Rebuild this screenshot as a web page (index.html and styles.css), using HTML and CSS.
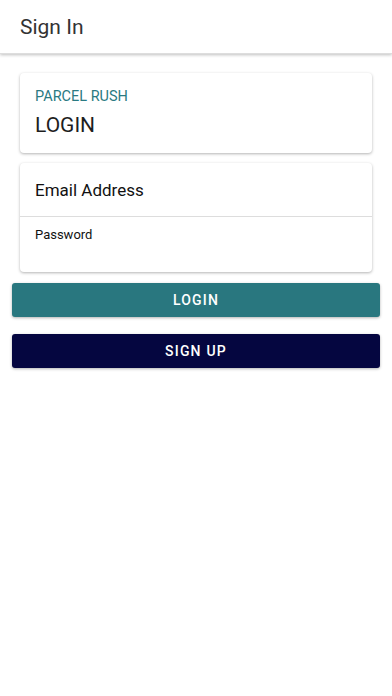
FILE: index.html
```html
<!DOCTYPE html>
<html>
<head>
<meta charset="utf-8">
<link rel="stylesheet" href="styles.css">
</head>
<body>
<header class="topbar"><h1 class="title">Sign In</h1></header>
<main class="content">
  <section class="card head-card">
    <div class="brand">PARCEL RUSH</div>
    <div class="heading">LOGIN</div>
  </section>
  <section class="card form-card">
    <div class="field email">Email Address</div>
    <div class="field password">Password</div>
  </section>
  <div class="buttons">
    <button class="btn btn-login">LOGIN</button>
    <button class="btn btn-signup">SIGN UP</button>
  </div>
</main>
</body>
</html>
```
FILE: styles.css
```css
* { box-sizing: border-box; }
html, body { margin: 0; padding: 0; background: #fff; }
body { font-family: Roboto, "Noto Sans", sans-serif; width: 392px; height: 696px; overflow: hidden; }
.topbar {
  height: 54px;
  display: flex;
  align-items: center;
  padding: 0 20px;
  background: #fff;
  box-shadow: 0 1px 3px rgba(0,0,0,0.25);
  border-bottom: 1px solid #ddd;
}
.title { margin: 0; font-size: 21px; font-weight: 400; color: #333; padding-top: 1px; }
.content { padding: 19px 12px 0; display: flex; flex-direction: column; }
.card {
  margin: 0 8px;
  background: #fff;
  border-radius: 4px;
  box-shadow: 0 1px 3px rgba(0,0,0,0.3);
}
.head-card { height: 80px; padding: 15px 15px 0; }
.brand { color: #2a7a82; font-size: 14.5px; line-height: 18px; }
.heading { color: #1e1e1e; font-size: 21px; line-height: 24px; margin-top: 7px; font-weight: 400; }
.form-card { margin-top: 10px; height: 109px; display: flex; flex-direction: column; }
.field { padding: 0 15px; color: #111; }
.email { height: 54px; font-size: 17px; display: flex; align-items: center; border-bottom: 1px solid #ddd; padding-top: 1px; }
.password { font-size: 13px; padding-top: 10px; }
.buttons { margin-top: 11px; display: flex; flex-direction: column; gap: 17px; }
.btn {
  height: 34px;
  border: none;
  border-radius: 3px;
  color: #fff;
  font-family: Roboto, "Noto Sans", sans-serif;
  font-size: 14px;
  font-weight: 500;
  letter-spacing: 1.2px;
  box-shadow: 0 1px 3px rgba(0,0,0,0.3);
}
.btn-login { background: #29777f; }
.btn-signup { background: #050640; }
```
